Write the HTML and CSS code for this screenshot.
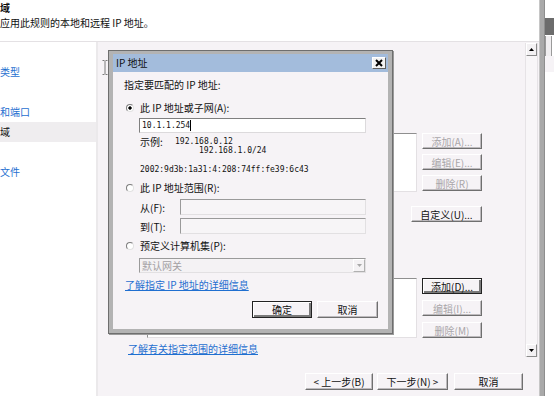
FILE: index.html
```html
<!DOCTYPE html>
<html lang="zh-CN">
<head>
  <meta charset="UTF-8" />
  <meta name="viewport" content="width=device-width, initial-scale=1.0" />
  <title>新建入站规则向导 - 作用域</title>
  <link rel="stylesheet" href="styles.css">
</head>
<body>
  <div class="screen">
    <div class="wizard">
      <div class="header">
        <div class="title">域</div>
        <div class="subtitle">应用此规则的本地和远程 IP 地址。</div>
      </div>

      <div class="main">
        <ul class="steps">
          <li>类型</li>
          <li></li>
          <li>和端口</li>
          <li class="current">域</li>
          <li></li>
          <li>文件</li>
        </ul>

        <div class="content">
          <div class="pane">
            <div class="pane-inner">
              <div class="addr-group local">
                <div class="listbox"></div>
                <div class="btn-col">
                  <button class="btn" disabled>添加(A)...</button>
                  <button class="btn" disabled>编辑(E)...</button>
                  <button class="btn" disabled>删除(R)</button>
                </div>
              </div>
              <div class="custom-row">
                <button class="btn btn-custom">自定义(U)...</button>
              </div>
              <div class="addr-group remote">
                <div class="listbox"></div>
                <div class="btn-col">
                  <button class="btn default">添加(D)...</button>
                  <button class="btn" disabled>编辑(I)...</button>
                  <button class="btn" disabled>删除(M)</button>
                </div>
              </div>
              <a class="link pane-link" href="#">了解有关指定范围的详细信息</a>
            </div>
            <div class="scrollbar">
              <div class="sb-btn">
                <svg width="5" height="3" viewBox="0 0 5 3"><path d="M0 3 L2.5 0 L5 3 Z" fill="#000"/></svg>
              </div>
              <div class="sb-track"></div>
              <div class="sb-btn">
                <svg width="5" height="3" viewBox="0 0 5 3"><path d="M0 0 L5 0 L2.5 3 Z" fill="#000"/></svg>
              </div>
            </div>
          </div>

          <div class="footer">
            <button class="btn wz-btn">&lt; 上一步(B)</button>
            <button class="btn wz-btn next">下一步(N) &gt;</button>
            <button class="btn wz-btn cancel">取消</button>
          </div>

          <!-- mouse pointer -->
          <div class="cursor">
            <svg width="6" height="15" viewBox="0 0 6 15">
              <path d="M0.5 0.5 H2.5 M3.5 0.5 H5.5 M3 1 V14 M0.5 14.5 H2.5 M3.5 14.5 H5.5" stroke="#7a7a7a" stroke-width="1" fill="none"/>
            </svg>
          </div>

          <div class="dialog">
            <div class="titlebar">
              <span class="caption">IP 地址</span>
              <span class="close">
                <svg width="8" height="8" viewBox="0 0 8 8"><path d="M1 1 L7 7 M7 1 L1 7" stroke="#000" stroke-width="2"/></svg>
              </span>
            </div>
            <div class="dlg-body">
              <div class="intro">指定要匹配的 IP 地址:</div>

              <div class="radio-row r-first"><span class="radio checked"></span>此 IP 地址或子网(A):</div>
              <div class="field field-addr"><span class="mono">10.1.1.254</span><span class="caret"></span></div>

              <div class="example">
                <div class="ex-line l1"><span class="ex-label">示例:</span><span class="mono">192.168.0.12</span></div>
                <div class="ex-line l2 mono">192.168.1.0/24</div>
                <div class="ex-line l3 mono">2002:9d3b:1a31:4:208:74ff:fe39:6c43</div>
              </div>

              <div class="radio-row r-range"><span class="radio"></span>此 IP 地址范围(R):</div>
              <div class="range-row from"><span class="range-label">从(F):</span><span class="field disabled"></span></div>
              <div class="range-row to"><span class="range-label">到(T):</span><span class="field disabled"></span></div>

              <div class="radio-row r-set"><span class="radio"></span>预定义计算机集(P):</div>
              <div class="select">
                <span class="select-text">默认网关</span>
                <span class="drop">
                  <svg width="5" height="3" viewBox="0 0 5 3"><path d="M0 0 L5 0 L2.5 3 Z" fill="#a8a8a8"/></svg>
                </span>
              </div>

              <a class="link dlg-link" href="#">了解指定 IP 地址的详细信息</a>

              <div class="dlg-buttons">
                <button class="btn default ok">确定</button>
                <button class="btn cancel-dlg">取消</button>
              </div>
            </div>
          </div>
        </div>
      </div>
    </div>

    <div class="frame-bar"></div>
    <div class="side">
      <div class="side-dark"></div>
      <div class="side-tabs"></div>
      <div class="side-light"></div>
    </div>
  </div>
</body>
</html>
```

FILE: styles.css
```css
* {
  box-sizing: border-box;
}
body {
  margin: 0;
  width: 554px;
  height: 396px;
  overflow: hidden;
  font-family: "Noto Sans CJK SC", "Liberation Sans", sans-serif;
  font-size: 10px;
  color: #111;
  background: #fff;
}
.screen {
  display: flex;
  height: 396px;
}
.wizard {
  width: 539px;
  display: flex;
  flex-direction: column;
}

/* header */
.header {
  height: 42px;
  background: #fff;
  border-bottom: 1px solid #e4e1e4;
  padding-top: 2px;
}
.title {
  font-weight: bold;
  line-height: 12px;
}
.subtitle {
  line-height: 12px;
  margin-top: 3px;
}

/* left steps */
.main {
  flex: 1;
  display: flex;
  min-height: 0;
}
.steps {
  list-style: none;
  margin: 0;
  padding: 20px 0 0;
  width: 98px;
  background: #fff;
  border-right: 2px solid #ebe9eb;
}
.steps li {
  height: 20px;
  line-height: 20px;
  color: #1f6fd0;
  white-space: nowrap;
}
.steps li.current {
  color: #111;
  background: #efedef;
}

/* right content */
.content {
  flex: 1;
  position: relative;
  background: #f6f3f6;
  display: flex;
  flex-direction: column;
}
.pane {
  height: 316px;
  display: flex;
}
.pane-inner {
  flex: 1;
  padding-top: 91px;
}
.addr-group {
  display: flex;
  gap: 5px;
  margin-left: 49px;
}
.addr-group.remote {
  margin-top: 56px;
}
.listbox {
  width: 270px;
  height: 59px;
  background: #fff;
  border: 1px solid;
  border-color: #8f8f8f #e3e0e3 #e3e0e3 #8f8f8f;
}
.remote .listbox {
  height: 60px;
}
.btn-col {
  width: 60px;
  display: flex;
  flex-direction: column;
  gap: 5px;
}
.remote .btn-col {
  gap: 6px;
}
.custom-row {
  width: 335px;
  margin: 14px 0 0 49px;
  display: flex;
  justify-content: flex-end;
}
.btn-custom {
  width: 71px;
}
.link {
  color: #1f6fd0;
  text-decoration: underline;
  line-height: 12px;
  white-space: nowrap;
}
.pane-link {
  display: inline-block;
  margin: 5px 0 0 30px;
}

/* scrollbar */
.scrollbar {
  width: 13px;
  margin: 1px 1px 1px 0;
  display: flex;
  flex-direction: column;
  background: #f8f6f8;
  border-left: 1px solid #e6e3e6;
  border-right: 1px solid #e6e3e6;
}
.sb-btn {
  height: 13px;
  background: #f3f1f3;
  border: 1px solid;
  border-color: #fff #8a8a8a #8a8a8a #fff;
  display: flex;
  align-items: center;
  justify-content: center;
}
.sb-track {
  flex: 1;
}

/* buttons */
.btn {
  font: inherit;
  color: #111;
  background: #f6f3f6;
  border: 1px solid;
  border-color: #fff #6f6f6f #6f6f6f #fff;
  box-shadow: inset -1px -1px 0 #bdbabd;
  padding: 0;
  height: 16px;
  line-height: 13px;
  white-space: nowrap;
}
.btn:disabled {
  color: #a9a6a9;
}
.btn.default {
  border-color: #222;
  box-shadow: inset 1px 1px 0 #fff, inset -2px -2px 0 #7a7a7a;
}

/* footer */
.footer {
  flex: 1;
  display: flex;
  justify-content: flex-end;
  align-items: flex-start;
  padding: 15px 16px 0 0;
}
.wz-btn {
  width: 68px;
  height: 17px;
}
.wz-btn.next {
  width: 71px;
  margin-left: 4px;
}
.wz-btn.cancel {
  width: 69px;
  margin-left: 6px;
}

.cursor {
  position: absolute;
  left: 4px;
  top: 18px;
  line-height: 0;
}

/* dialog */
.dialog {
  position: absolute;
  left: 10px;
  top: 8px;
  width: 285px;
  height: 284px;
  border: 1px solid #6e6e6e;
  background: #b3b3b3;
  padding: 3px 4px 4px;
  display: flex;
  flex-direction: column;
  box-shadow: 1px 1px 0 #9a9a9a;
}
.titlebar {
  height: 18px;
  background: #a3bcdc;
  display: flex;
  align-items: center;
  justify-content: space-between;
  padding: 0 2px 0 3px;
}
.caption {
  line-height: 12px;
}
.close {
  width: 14px;
  height: 12px;
  background: #f3f3f3;
  border: 1px solid;
  border-color: #fff #5e5e5e #5e5e5e #fff;
  display: flex;
  align-items: center;
  justify-content: center;
}
.dlg-body {
  flex: 1;
  background: #f6f3f6;
  padding: 7px 10px 11px 11px;
  display: flex;
  flex-direction: column;
  align-items: flex-start;
}
.intro {
  line-height: 12px;
}
.radio-row {
  display: flex;
  align-items: center;
  gap: 6px;
  padding-left: 2px;
  height: 12px;
  line-height: 12px;
}
.r-first { margin-top: 11px; }
.r-range { margin-top: 8px; }
.r-set { margin-top: 6px; }
.radio {
  width: 8px;
  height: 8px;
  border-radius: 50%;
  border: 1px solid;
  border-color: #7d7d7d #e2e2e2 #e2e2e2 #7d7d7d;
  background: #fff;
}
.radio.checked {
  background: radial-gradient(circle, #000 0 1.4px, #fff 1.9px);
}
.mono {
  font-family: "DejaVu Sans Mono", "Liberation Mono", monospace;
  font-size: 8px;
}
.field {
  display: flex;
  align-items: center;
  width: 227px;
  height: 15px;
  background: #fff;
  border: 1px solid;
  border-color: #7f7f7f #dcdadc #dcdadc #7f7f7f;
  padding-left: 2px;
}
.field.disabled {
  width: 186px;
  height: 16px;
  background: #f7f5f7;
  border-color: #9a9a9a #e2e0e2 #e2e0e2 #9a9a9a;
}
.field-addr {
  margin: 4px 0 0 15px;
}
.caret {
  width: 1px;
  height: 11px;
  background: #000;
}
.example {
  margin: 4px 0 0 16px;
}
.ex-line {
  white-space: nowrap;
  display: flex;
  align-items: center;
}
.ex-line.l1 { height: 9px; }
.ex-line.l2 { height: 8px; margin-left: 59px; }
.ex-line.l3 { height: 9px; margin-top: 11px; }
.ex-label {
  width: 35px;
}
.range-row {
  display: flex;
  align-items: center;
  margin-left: 16px;
}
.range-row.from { margin-top: 5px; }
.range-row.to { margin-top: 3px; }
.range-label {
  width: 40px;
}
.select {
  margin: 6px 0 0 15px;
  width: 227px;
  height: 15px;
  display: flex;
  align-items: center;
  justify-content: space-between;
  background: #f4f2f4;
  border: 1px solid;
  border-color: #9a9a9a #e2e0e2 #e2e0e2 #9a9a9a;
  color: #a3a0a3;
  padding-left: 2px;
}
.drop {
  width: 12px;
  height: 13px;
  border: 1px solid;
  border-color: #fff #b0b0b0 #b0b0b0 #fff;
  display: flex;
  align-items: center;
  justify-content: center;
}
.dlg-link {
  margin: 6px 0 0 1px;
}
.dlg-buttons {
  align-self: flex-end;
  margin-top: 10px;
  display: flex;
  gap: 5px;
}
.dlg-buttons .btn {
  height: 17px;
}
.ok { width: 60px; }
.cancel-dlg { width: 61px; }

/* window edge on the right */
.frame-bar {
  width: 6px;
  background: #a9a9a9;
  border-left: 1px solid #c6c6c6;
  border-right: 1px solid #8e8e8e;
}
.side {
  flex: 1;
  background: #fff;
  padding-top: 18px;
}
.side-dark {
  height: 17px;
  background: #6c6c6c;
}
.side-tabs {
  height: 20px;
  margin-top: 1px;
  background: #f0eef0;
  border-left: 1px solid #9a9a9a;
  border-right: 1px solid #9a9a9a;
  margin-right: 2px;
}
.side-light {
  height: 16px;
  background: #f6f3f6;
}
```
